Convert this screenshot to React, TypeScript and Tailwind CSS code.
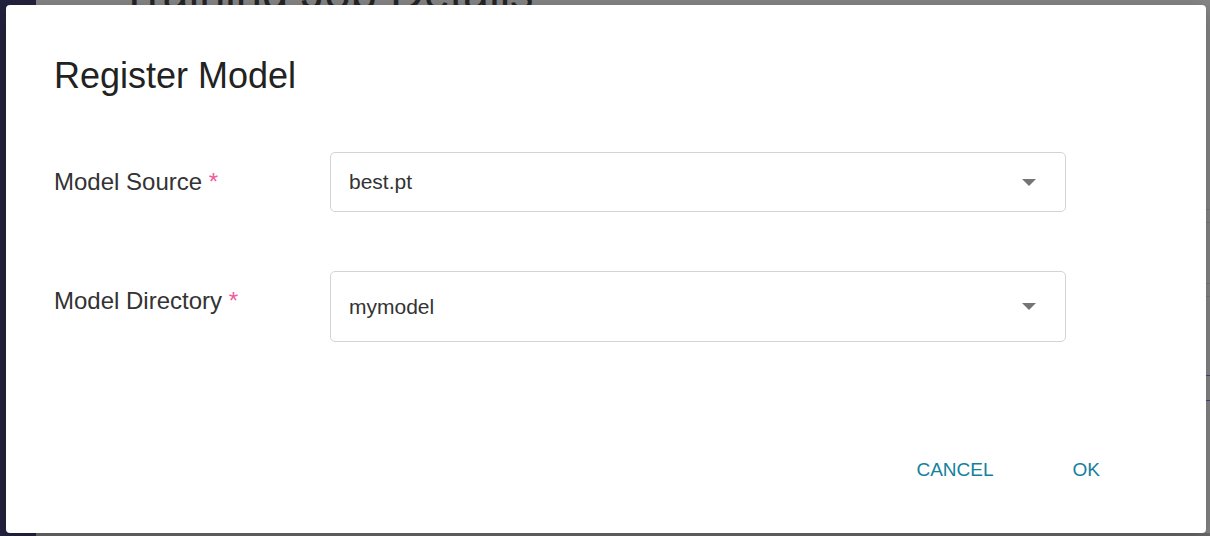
import type { ReactNode } from "react";

const font = { fontFamily: '"Liberation Sans", Arial, sans-serif' };

function Caret() {
  return (
    <svg width="14" height="7" viewBox="0 0 14 7" className="shrink-0">
      <polygon points="0,0 14,0 7,7" fill="#757575" />
    </svg>
  );
}

interface FieldRowProps {
  label: string;
  value: string;
  height: string;
  children?: ReactNode;
}

function FieldRow({ label, value, height }: FieldRowProps) {
  return (
    <div className="flex items-start">
      <div className="w-[276px] pt-[16px] text-[24px] leading-[28px] text-[#333333]">
        {label} <span className="text-[#ef5a9d]">*</span>
      </div>
      <div
        className={`${height} w-[736px] flex items-center justify-between rounded-[5px] border border-[#d4d4d4] pl-[18px] pr-[29px]`}
      >
        <span className="text-[21px] text-[#333333]">{value}</span>
        <Caret />
      </div>
    </div>
  );
}

export default function App() {
  return (
    <div className="relative w-[1210px] h-[536px] overflow-hidden bg-[#878787]" style={font}>
      {/* page behind the dialog, already dimmed */}
      <div className="flex h-full">
        <div className="w-[36px] bg-[#23233f]" />
        <div className="flex-1 flex flex-col">
          <div className="-mt-[33px] pl-[84px] text-[47px] leading-[52px] text-[#262626] whitespace-nowrap">
            Training Job Details
          </div>
          <div className="flex-1 flex flex-col items-end pt-[140px]">
            <div className="w-[40px] border-t border-[#7a7a7a] mt-[50px]" />
            <div className="w-[40px] border-t border-[#7a7a7a] mt-[12px]" />
            <div className="w-[40px] border-t border-[#7a7a7a] mt-[60px]" />
            <div className="w-[40px] border-t border-[#7a7a7a] mt-[12px]" />
            <div className="w-[40px] border-t border-[#4a3f8a] mt-[78px]" />
            <div className="w-[40px] border-t border-[#4a3f8a] mt-[24px]" />
          </div>
          <div className="h-[3px] bg-[#6b6b6b]" />
        </div>
      </div>

      {/* dialog */}
      <div className="absolute inset-0 pt-[5px] pl-[6px]">
        <div className="w-[1200px] h-[528px] bg-white rounded-[4px] shadow-[0_4px_20px_rgba(0,0,0,0.25)] flex flex-col pl-[48px]">
          <h2 className="mt-[50px] text-[36px] leading-[42px] text-[#222222]">Register Model</h2>

          <div className="mt-[55px] flex flex-col gap-[59px]">
            <FieldRow label="Model Source" value="best.pt" height="h-[60px]" />
            <FieldRow label="Model Directory" value="mymodel" height="h-[71px]" />
          </div>

          <div className="mt-auto mb-[43px] flex justify-end pr-[82px] gap-[31px]">
            <button className="h-[40px] px-[24px] text-[19px] text-[#13819e] uppercase">Cancel</button>
            <button className="h-[40px] px-[24px] text-[19px] text-[#13819e] uppercase">OK</button>
          </div>
        </div>
      </div>
    </div>
  );
}
